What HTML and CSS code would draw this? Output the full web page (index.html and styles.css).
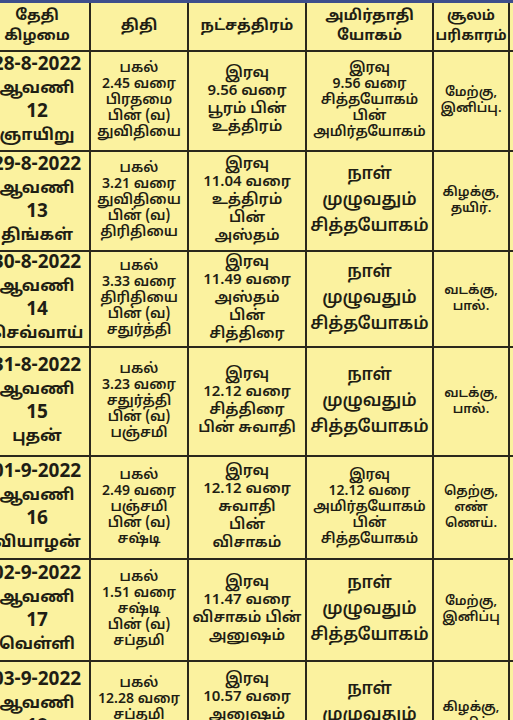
FILE: index.html
```html
<!DOCTYPE html>
<html lang="ta">
<head>
<meta charset="utf-8">
<title>ஆவணி பஞ்சாங்கம்</title>
<link rel="stylesheet" href="styles.css">
</head>
<body>
<div class="page">
  <div class="topbar"></div>
  <div class="clip">
    <table class="cal">
      <colgroup>
        <col class="c1"><col class="c2"><col class="c3"><col class="c4"><col class="c5"><col class="c6">
      </colgroup>
      <thead>
        <tr class="head">
          <th>தேதி<br>கிழமை</th>
          <th>திதி</th>
          <th>நட்சத்திரம்</th>
          <th>அமிர்தாதி<br>யோகம்</th>
          <th class="sm">சூலம்<br>பரிகாரம்</th>
          <th></th>
        </tr>
      </thead>
      <tbody>
        <tr class="r1">
          <td class="date"><span class="num">28-8-2022</span><br>ஆவணி<br><span class="num">12</span><br>ஞாயிறு</td>
          <td class="thithi">பகல்<br>2.45 வரை<br>பிரதமை<br>பின் (வ)<br>துவிதியை</td>
          <td class="star">இரவு<br>9.56 வரை<br>பூரம் பின்<br>உத்திரம்</td>
          <td class="yoga">இரவு<br>9.56 வரை<br>சித்தயோகம்<br>பின்<br>அமிர்தயோகம்</td>
          <td class="soolam">மேற்கு,<br>இனிப்பு.</td>
          <td class="edge"></td>
        </tr>
        <tr class="r2">
          <td class="date"><span class="num">29-8-2022</span><br>ஆவணி<br><span class="num">13</span><br>திங்கள்</td>
          <td class="thithi">பகல்<br>3.21 வரை<br>துவிதியை<br>பின் (வ)<br>திரிதியை</td>
          <td class="star">இரவு<br>11.04 வரை<br>உத்திரம்<br>பின்<br>அஸ்தம்</td>
          <td class="yoga big">நாள்<br>முழுவதும்<br>சித்தயோகம்</td>
          <td class="soolam">கிழக்கு,<br>தயிர்.</td>
          <td class="edge"></td>
        </tr>
        <tr class="r3">
          <td class="date"><span class="num">30-8-2022</span><br>ஆவணி<br><span class="num">14</span><br>செவ்வாய்</td>
          <td class="thithi">பகல்<br>3.33 வரை<br>திரிதியை<br>பின் (வ)<br>சதுர்த்தி</td>
          <td class="star">இரவு<br>11.49 வரை<br>அஸ்தம்<br>பின்<br>சித்திரை</td>
          <td class="yoga big">நாள்<br>முழுவதும்<br>சித்தயோகம்</td>
          <td class="soolam">வடக்கு,<br>பால்.</td>
          <td class="edge"></td>
        </tr>
        <tr class="r4">
          <td class="date"><span class="num">31-8-2022</span><br>ஆவணி<br><span class="num">15</span><br>புதன்</td>
          <td class="thithi">பகல்<br>3.23 வரை<br>சதுர்த்தி<br>பின் (வ)<br>பஞ்சமி</td>
          <td class="star">இரவு<br>12.12 வரை<br>சித்திரை<br>பின் சுவாதி</td>
          <td class="yoga big">நாள்<br>முழுவதும்<br>சித்தயோகம்</td>
          <td class="soolam">வடக்கு,<br>பால்.</td>
          <td class="edge"></td>
        </tr>
        <tr class="r5">
          <td class="date"><span class="num">01-9-2022</span><br>ஆவணி<br><span class="num">16</span><br>வியாழன்</td>
          <td class="thithi">பகல்<br>2.49 வரை<br>பஞ்சமி<br>பின் (வ)<br>சஷ்டி</td>
          <td class="star">இரவு<br>12.12 வரை<br>சுவாதி<br>பின்<br>விசாகம்</td>
          <td class="yoga">இரவு<br>12.12 வரை<br>அமிர்தயோகம்<br>பின்<br>சித்தயோகம்</td>
          <td class="soolam">தெற்கு,<br>எண்<br>ணெய்.</td>
          <td class="edge"></td>
        </tr>
        <tr class="r6">
          <td class="date"><span class="num">02-9-2022</span><br>ஆவணி<br><span class="num">17</span><br>வெள்ளி</td>
          <td class="thithi">பகல்<br>1.51 வரை<br>சஷ்டி<br>பின் (வ)<br>சப்தமி</td>
          <td class="star">இரவு<br>11.47 வரை<br>விசாகம் பின்<br>அனுஷம்</td>
          <td class="yoga big">நாள்<br>முழுவதும்<br>சித்தயோகம்</td>
          <td class="soolam">மேற்கு,<br>இனிப்பு</td>
          <td class="edge"></td>
        </tr>
        <tr class="r7">
          <td class="date"><span class="num">03-9-2022</span><br>ஆவணி<br><span class="num">18</span><br>சனி</td>
          <td class="thithi">பகல்<br>12.28 வரை<br>சப்தமி<br>பின் (வ)<br>அஷ்டமி</td>
          <td class="star">இரவு<br>10.57 வரை<br>அனுஷம்<br>பின்<br>கேட்டை</td>
          <td class="yoga big">நாள்<br>முழுவதும்<br>சித்தயோகம்</td>
          <td class="soolam">கிழக்கு,<br>தயிர்.</td>
          <td class="edge"></td>
        </tr>
      </tbody>
    </table>
  </div>
</div>
</body>
</html>
```
FILE: styles.css
```css
html, body {
  margin: 0;
  padding: 0;
  background: #fbf29f;
}
.page {
  width: 513px;
  height: 720px;
  overflow: hidden;
  background: #fbf29f;
  font-family: "Noto Sans Tamil", "Lohit Tamil", "Noto Sans", "DejaVu Sans", sans-serif;
  color: #1f1e14;
}
.topbar {
  height: 3px;
  background: #3d4e8c;
}
.clip {
  width: 513px;
  overflow: hidden;
}
.cal {
  margin-left: -17px;
  border-collapse: collapse;
  table-layout: fixed;
  width: 605px;
}
.c1 { width: 106px; }
.c2 { width: 98px; }
.c3 { width: 118px; }
.c4 { width: 127px; }
.c5 { width: 76px; }
.c6 { width: 80px; }
.cal th, .cal td {
  border: 2px solid #2a281c;
  text-align: center;
  vertical-align: middle;
  padding: 0;
  overflow: hidden;
}
.cal thead th { border-top: none; }
.head { height: 48px; }
.head th {
  font-size: 15px;
  line-height: 20px;
  font-weight: 700;
}
.head th.sm { font-size: 14px; }
.r1 { height: 100px; }
.r2 { height: 100px; }
.r3 { height: 92px; }
.r4 { height: 109px; }
.r5 { height: 103px; }
.r6 { height: 102px; }
.r7 { height: 110px; }
.date {
  font-size: 16px;
  line-height: 23px;
  font-weight: 700;
}
.date .num {
  font-size: 19px;
}
.thithi {
  font-size: 14px;
  line-height: 16px;
  font-weight: 600;
}
.star {
  font-size: 15px;
  line-height: 18px;
  font-weight: 600;
}
.yoga {
  font-size: 14px;
  line-height: 16px;
  font-weight: 600;
}
.yoga.big {
  font-size: 17px;
  line-height: 26px;
  font-weight: 600;
}
.soolam {
  font-size: 13px;
  line-height: 16px;
  font-weight: 600;
}
```
